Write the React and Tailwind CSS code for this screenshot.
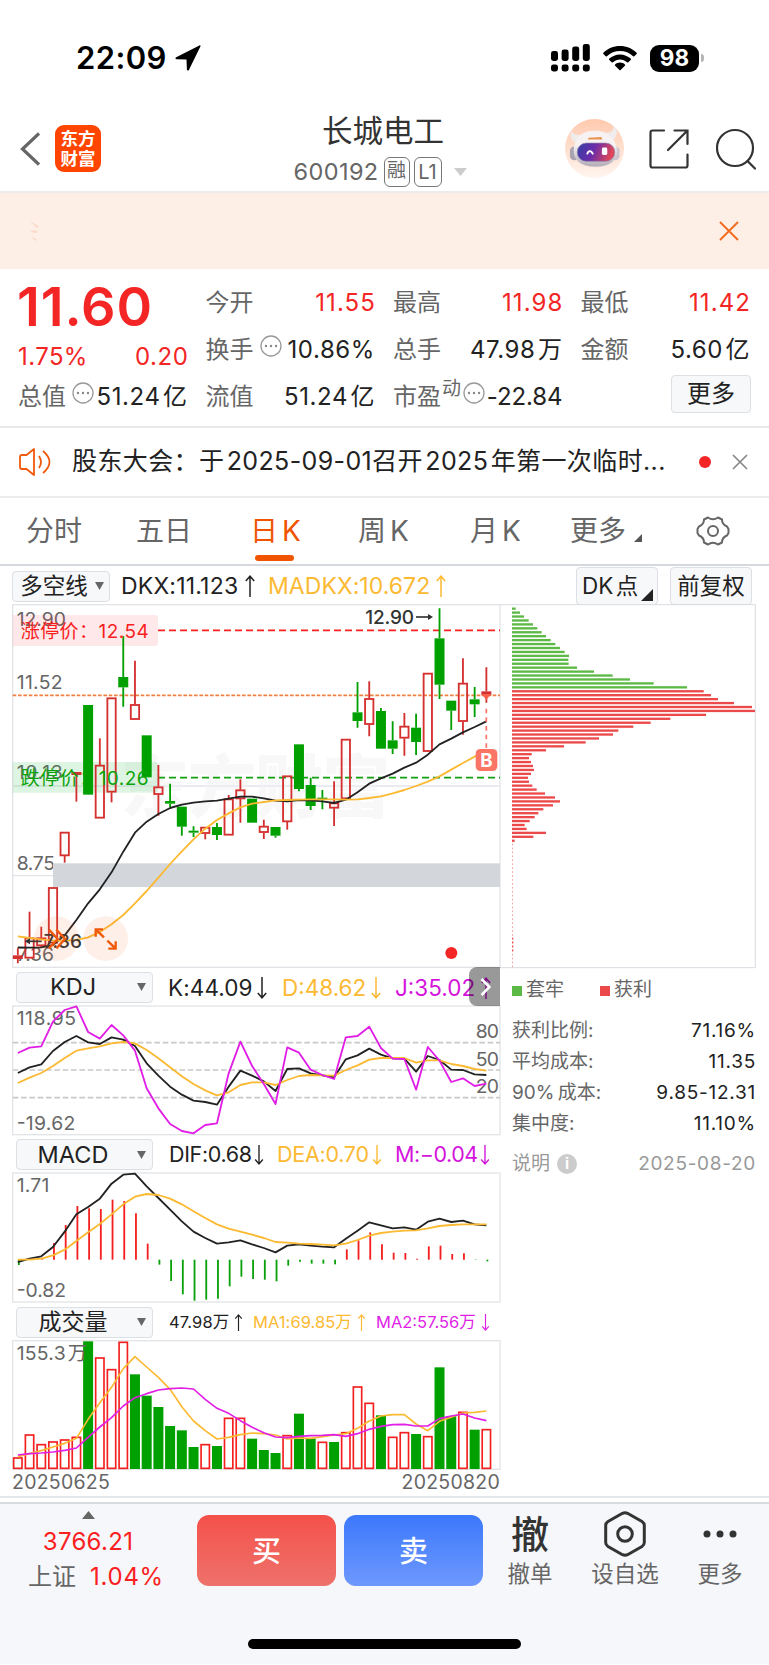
// All panels share one unit: 3 svg units per screen pixel.
const FIRST_X = 53.5;
const STEP = 35.14;
const xAt = (i) => FIRST_X + i * STEP;
const toPoints = (values) => values.map((v, i) => `${xAt(i).toFixed(1)},${v}`).join(" ");

const RED = "#d4302f";
const GREEN = "#00a000";

// [colour, high, top, bottom, low]
const candles = [
  ["r", 1165, 1186, 1197, 1210], ["r", 1055, 1133, 1195, 1195], ["r", 1100, 1133, 1158, 1162],
  ["r", 982, 982, 1150, 1150], ["r", 816, 816, 888, 908], ["r", 636, 636, 645, 725],
  ["g", 435, 435, 704, 704], ["r", 535, 615, 775, 775], ["r", 413, 413, 697, 727],
  ["g", 228, 351, 382, 440], ["r", 302, 433, 479, 479], ["g", 526, 526, 652, 652],
  ["r", 615, 680, 704, 767], ["g", 671, 723, 731, 742], ["g", 740, 740, 800, 827],
  ["g", 799, 812, 818, 831], ["r", 801, 801, 821, 838], ["g", 789, 801, 825, 840],
  ["r", 705, 716, 826, 826], ["r", 658, 689, 717, 788], ["g", 716, 716, 788, 788],
  ["r", 779, 798, 818, 837], ["g", 801, 801, 827, 833], ["r", 647, 647, 786, 809],
  ["g", 553, 553, 687, 694], ["g", 653, 675, 738, 750], ["g", 690, 713, 718, 748],
  ["r", 664, 728, 745, 798], ["r", 537, 537, 717, 717], ["g", 366, 457, 483, 503],
  ["r", 364, 415, 494, 529], ["g", 444, 453, 566, 566], ["g", 484, 541, 566, 582],
  ["r", 459, 498, 535, 587], ["g", 461, 503, 546, 585], ["r", 339, 339, 575, 575],
  ["g", 145, 235, 374, 417], ["g", 422, 422, 452, 510], ["r", 295, 369, 485, 524],
  ["g", 381, 418, 433, 471], ["r", 322, 394, 406, 428],
];

const dkx = [1162, 1163, 1162, 1155, 1126, 1080, 1030, 988, 937, 875, 818, 785, 762, 744, 734, 728, 724, 722, 716, 710, 710, 715, 722, 724, 720, 721, 724, 729, 719, 697, 671, 655, 641, 623, 608, 584, 553, 536, 517, 501, 484];
const madkx = [1129, 1134, 1138, 1142, 1142, 1140, 1132, 1116, 1093, 1065, 1030, 993, 953, 912, 874, 838, 806, 780, 760, 742, 731, 726, 721, 720, 719, 718, 718, 718, 719, 718, 714, 709, 700, 690, 678, 665, 649, 629, 609, 590, 571];

const kLine = [309, 292, 283, 243, 216, 198, 217, 222, 202, 209, 228, 280, 317, 350, 374, 392, 396, 404, 350, 302, 317, 334, 363, 297, 295, 310, 316, 322, 268, 256, 236, 254, 265, 266, 305, 258, 270, 299, 300, 313, 315];
const dLine = [339, 323, 309, 288, 264, 242, 235, 229, 220, 216, 220, 240, 265, 292, 319, 342, 361, 376, 367, 345, 337, 337, 345, 330, 318, 315, 316, 317, 300, 286, 269, 264, 264, 264, 278, 271, 271, 282, 288, 297, 302];
const jLine = [249, 233, 229, 155, 120, 109, 186, 206, 165, 196, 242, 355, 415, 462, 483, 490, 465, 460, 310, 215, 288, 342, 402, 232, 248, 299, 315, 327, 202, 198, 170, 234, 266, 267, 359, 231, 272, 336, 325, 348, 341];

const macd = [886, 870, 866, 820, 766, 709, 716, 718, 690, 694, 731, 822, 885, 934, 974, 993, 990, 987, 950, 921, 928, 930, 935, 888, 876, 882, 882, 884, 839, 812, 788, 824, 849, 850, 867, 830, 828, 853, 851, 871, 875];
const dif = [877, 867, 860, 832, 786, 734, 712, 687, 642, 615, 612, 650, 685, 720, 755, 786, 805, 822, 818, 812, 824, 835, 848, 828, 824, 828, 831, 833, 807, 783, 758, 767, 776, 773, 780, 756, 747, 757, 753, 764, 767];
const dea = [870, 870, 867, 857, 840, 814, 788, 763, 734, 704, 681, 673, 676, 687, 704, 725, 745, 764, 777, 786, 795, 805, 817, 819, 822, 823, 825, 827, 822, 811, 798, 790, 786, 783, 782, 776, 769, 766, 764, 764, 764];

const volumeTops = [472, 403, 432, 424, 418, 410, 124, 172, 207, 125, 223, 287, 321, 378, 391, 441, 432, 438, 353, 353, 416, 450, 459, 405, 341, 416, 425, 426, 396, 259, 308, 346, 410, 396, 402, 408, 202, 348, 335, 389, 387];
const volumeSides = "rrrrrrgrrrggggggrgrrgggrggrgrrrgrrgrggrgr";
const ma1 = [470, 461, 452, 441, 430, 415, 358, 308, 262, 206, 170, 201, 232, 268, 320, 363, 392, 417, 412, 404, 399, 401, 405, 417, 414, 415, 410, 405, 401, 385, 363, 348, 344, 344, 372, 392, 364, 352, 339, 337, 333];
const ma2 = [465, 461, 459, 456, 451, 444, 412, 381, 353, 318, 293, 281, 270, 266, 264, 267, 298, 325, 340, 362, 382, 398, 411, 413, 409, 407, 406, 404, 409, 401, 388, 379, 374, 373, 378, 378, 356, 348, 342, 354, 362];

const trapped = [47, 60, 72, 86, 99, 112, 125, 138, 152, 166, 180, 194, 207, 205, 206, 231, 282, 338, 390, 461, 561];
const profit = [611, 633, 654, 702, 756, 765, 618, 511, 452, 400, 355, 339, 297, 257, 192, 138, 95, 87, 93, 99, 102, 93, 84, 87, 97, 110, 135, 165, 180, 159, 130, 115, 104, 89, 74, 80, 138, 100, 44];

const costs = [
  ["获利比例:", "71.16%"],
  ["平均成本:", "11.35"],
  ["90% 成本:", "9.85-12.31"],
  ["集中度:", "11.10%"],
];

function Line({ values, color, width = 5 }) {
  return <polyline points={toPoints(values)} fill="none" stroke={color} strokeWidth={width} strokeLinejoin="round" />;
}

function Arrow({ down, className }) {
  return (
    <svg viewBox="0 0 10 22" className={className} fill="none" stroke="currentColor" strokeWidth="1.5">
      <path d={down ? "M5 0V20.5M0.8 16L5 20.8L9.2 16" : "M5 22V1.5M0.8 6L5 1.2L9.2 6"} />
    </svg>
  );
}

function Dots() {
  return (
    <svg viewBox="0 0 22 22" className="-mt-2 h-[22px] w-[22px] shrink-0" fill="none">
      <circle cx="11" cy="11" r="10" stroke="#999" strokeWidth="1.3" />
      <g fill="#888">
        <circle cx="6" cy="11" r="1.2" />
        <circle cx="11" cy="11" r="1.2" />
        <circle cx="16" cy="11" r="1.2" />
      </g>
    </svg>
  );
}

function Picker({ children, className }) {
  return (
    <div className={`flex h-[31px] shrink-0 items-center rounded border border-[#dcdfe4] bg-[#f7f8fa] text-[#222] ${className}`}>
      <span className="flex-1 text-center whitespace-nowrap">{children}</span>
      <svg viewBox="0 0 9 8" className="h-2 w-[9px] shrink-0" fill="#666">
        <path d="M0 0H9L4.5 8Z" />
      </svg>
    </div>
  );
}

function StatusBar() {
  return (
    <div className="flex h-[109px] items-center pt-[7px] pl-[76px] text-black">
      <span className="w-[94px] text-[31px] font-semibold tracking-[0.4px]">22:09</span>
      <svg viewBox="0 0 26 26" className="ml-[5px] h-[26px] w-[26px]">
        <path d="M25.5 1.2C25.7 0.5 25.2 0 24.4 0.4L1.2 12.2C0 12.9 0.2 14.2 1.5 14.2L11.5 14.4L11.9 24.6C12 26 13.3 26.2 13.9 25Z" />
      </svg>
      <svg viewBox="0 0 39 28" className="ml-[350px] h-7 w-[39px]">
        {[7, 5.5, 2.5, 0].map((y, i) => (
          <g key={y}>
            <rect x={i * 10.6} y={y} width="7" height={17 - y} rx="2.4" />
            <rect x={i * 10.6} y="20.5" width="7" height="7" rx="2.4" />
          </g>
        ))}
      </svg>
      <svg viewBox="0 0 34 25" className="ml-[13px] h-[25px] w-[34px]">
        <path d="M17 0C23.500 0 29.400 2.600 33.600 6.700C34 7.100 34 7.600 33.600 8L31.300 10.300C31 10.600 30.500 10.600 30.100 10.300C26.600 7 22 5.100 17 5.100S7.400 7 3.900 10.300C3.500 10.600 3 10.600 2.700 10.300L0.400 8C0 7.600 0 7.100 0.400 6.700C4.600 2.600 10.500 0 17 0Z" />
        <path d="M17 8.400C21.100 8.400 24.900 10 27.700 12.600C28.100 13 28.100 13.500 27.700 13.900L25.300 16.200C25 16.600 24.500 16.600 24.100 16.300C22.200 14.600 19.700 13.500 17 13.500S11.800 14.600 9.900 16.300C9.500 16.600 9 16.600 8.700 16.200L6.300 13.900C5.900 13.500 5.900 13 6.300 12.600C9.100 10 12.900 8.400 17 8.400Z" />
        <path d="M17 16.500C18.900 16.500 20.600 17.200 21.900 18.400C22.300 18.700 22.300 19.300 21.900 19.700L17.600 24C17.300 24.300 16.700 24.300 16.400 24L12.100 19.700C11.700 19.300 11.700 18.700 12.100 18.400C13.400 17.200 15.100 16.500 17 16.500Z" />
      </svg>
      <span className="ml-[13px] flex h-[27px] w-[49px] items-center justify-center rounded-[9px] bg-black text-[22.5px] font-bold text-white">
        98
      </span>
      <span className="ml-[2px] h-2 w-[3px] rounded-r bg-[#b5b5b5]" />
    </div>
  );
}

function Robot() {
  return (
    <svg viewBox="0 0 60 60" className="h-[59px] w-[59px]">
      <defs>
        <linearGradient id="halo" x1="0" y1="0" x2="0" y2="1">
          <stop offset="0" stopColor="#ffc9ae" />
          <stop offset="1" stopColor="#fff5ef" />
        </linearGradient>
        <linearGradient id="visor" x1="0" y1="0" x2="1" y2="0.2">
          <stop offset="0" stopColor="#3340a6" />
          <stop offset="0.5" stopColor="#6b2ba8" />
          <stop offset="1" stopColor="#e0485a" />
        </linearGradient>
        <linearGradient id="shell" x1="0" y1="0" x2="0" y2="1">
          <stop offset="0.4" stopColor="#f6f2f3" />
          <stop offset="1" stopColor="#b3acb8" />
        </linearGradient>
      </defs>
      <circle cx="30" cy="30" r="30" fill="url(#halo)" />
      <path d="M7 12C4 17 7 22 11 24L18 16C12 17 8 16 7 12Z" fill="#f1ecec" />
      <path d="M49 7C54 10 54 17 49 21L41 14C47 14 50 12 49 7Z" fill="#f1ecec" />
      <rect x="5" y="28" width="9" height="14" rx="4.500" fill="#aaa3b0" />
      <rect x="47" y="28" width="8.500" height="14" rx="4.200" fill="#cdc6d2" />
      <path d="M30 12C42 12 50 18 52.500 29C54.500 42 46 48.500 31 48.500S7.500 42 9 29C11 18 18 12 30 12Z" fill="url(#shell)" />
      <path d="M24 19L37 18.200L38 20.800H23Z" fill="#ea9350" />
      <rect x="12.500" y="24.500" width="38" height="18.500" rx="9" fill="url(#visor)" stroke="#8d80a8" strokeWidth="0.700" />
      <path d="M22.500 36C23.500 31.500 27 31.500 28.500 36" stroke="#fff" strokeWidth="1.900" fill="none" />
      <rect x="37.500" y="29" width="5.500" height="7.500" rx="1.500" fill="#fff" />
    </svg>
  );
}

function Header() {
  return (
    <header className="flex h-[84px] items-center border-b-2 border-[#ececec] pl-[20px]">
      <svg viewBox="0 0 20 34" className="-mt-[2px] h-[34px] w-5" fill="none" stroke="#666" strokeWidth="3.200">
        <path d="M19 1.500L2.500 17L19 32.500" />
      </svg>
      <div className="-mt-[3px] ml-[15px] flex h-[47px] w-[46px] flex-col items-center justify-center rounded-[9px] bg-[#ff4500] text-[17.500px] leading-[20px] font-semibold text-white">
        <span>东方</span>
        <span>财富</span>
      </div>
      <div className="ml-[187px] flex w-[190px] flex-col items-center">
        <h1 className="text-[30.500px] leading-[40px] text-[#333]">长城电工</h1>
        <div className="mt-[3px] -ml-[15px] flex h-[36px] items-center text-[#666]">
          <span className="ml-[9px] w-[90px] text-[23.500px] tracking-[0.400px]">600192</span>
          <span className="flex h-[30px] w-[26px] items-center justify-center rounded-[6px] border-[1.500px] border-[#777] text-[19px]">融</span>
          <span className="ml-[4px] flex h-[30px] w-[28px] items-center justify-center rounded-[6px] border-[1.500px] border-[#777] text-[20px]">L1</span>
          <svg viewBox="0 0 13 8" className="ml-3 h-2 w-[13px]" fill="#ccc">
            <path d="M0 0H13L6.500 8Z" />
          </svg>
        </div>
      </div>
      <div className="-mt-[3px] ml-auto flex items-center pr-[13px]">
        <Robot />
        <svg viewBox="0 0 40 40" className="ml-[25px] h-10 w-10" fill="none" stroke="#333" strokeWidth="2.200" strokeLinecap="round">
          <path d="M15 1.500H3.500Q1.500 1.500 1.500 3.500V36.500Q1.500 38.500 3.500 38.500H36.500Q38.500 38.500 38.500 36.500V25.500M25.500 1.500H38.500V15M38 2L19 21" />
        </svg>
        <svg viewBox="0 0 40 42" className="ml-[27px] h-[42px] w-10" fill="none" stroke="#333" strokeWidth="2.200" strokeLinecap="round">
          <circle cx="19" cy="20" r="18" />
          <path d="M31.500 33L39 40.500" />
        </svg>
      </div>
    </header>
  );
}

function Banner() {
  return (
    <div className="flex h-[76px] items-center justify-between bg-[#fdeee6] pr-[30px] pl-[30px]">
      <svg viewBox="0 0 9 20" className="h-5 w-[9px]" fill="#fad9c9">
        <path d="M0 0L8.500 5L8 7L5.500 5.500ZM0 10L7 9.500V12L3 11.500ZM0 15L6.500 18.500L5.500 20Z" />
      </svg>
      <svg viewBox="0 0 20 20" className="h-5 w-5" fill="none" stroke="#f5691b" strokeWidth="1.800">
        <path d="M1 1L19 19M19 1L1 19" />
      </svg>
    </div>
  );
}

function Stat({ label, value, red, dots, sup }) {
  return (
    <div className="flex h-[47px] items-center text-2xl whitespace-nowrap">
      <span className="-ml-px text-[#666]">{label}</span>
      {sup && <span className="-mt-4 ml-[1px] text-[19px] text-[#666]">{sup}</span>}
      {dots && <span className={sup ? "ml-[2px]" : "ml-[6px]"}><Dots /></span>}
      <span
        className={`ml-auto [word-spacing:-5px] ${sup ? "tracking-[-0.100px]" : red ? "-mr-px tracking-[1.100px]" : "tracking-[0.600px]"} ${red ? "text-[#f42525]" : "text-[#222]"}`}
      >
        {value}
      </span>
    </div>
  );
}

function Quote() {
  return (
    <section className="grid h-[159px] grid-cols-4 gap-x-[19px] border-b-2 border-[#e8e9eb] px-[19px] pt-[10px]">
      <div>
        <div className="-ml-[2px] flex h-[54px] items-center text-[54px] font-semibold tracking-[0.900px] text-[#f42525]">11.60</div>
        <div className="flex h-[40px] items-center justify-between pt-[7px] text-2xl text-[#f42525]">
          <span className="-ml-px tracking-[0.400px]">1.75%</span>
          <span className="-mr-px tracking-[0.600px]">0.20</span>
        </div>
        <Stat label="总值" value="51.24 亿" dots />
      </div>
      <div>
        <Stat label="今开" value="11.55" red />
        <Stat label="换手" value="10.86%" dots />
        <Stat label="流值" value="51.24 亿" />
      </div>
      <div>
        <Stat label="最高" value="11.98" red />
        <Stat label="总手" value="47.98 万" />
        <Stat label="市盈" value="-22.84" dots sup="动" />
      </div>
      <div>
        <Stat label="最低" value="11.42" red />
        <Stat label="金额" value="5.60 亿" />
        <button className="mt-[2px] -mr-px ml-auto flex h-[38px] w-[80px] items-center justify-center rounded border border-[#dcdfe4] bg-[#f7f8fa] text-2xl text-[#222]">
          更多
        </button>
      </div>
    </section>
  );
}

function Notice() {
  return (
    <div className="flex h-[70px] items-center border-b-2 border-[#ececec] pl-[19px] text-[#222]">
      <svg viewBox="0 0 34 28" className="h-7 w-[34px]" fill="none" stroke="#f0590a" strokeWidth="1.800" strokeLinejoin="round">
        <path d="M15 1V27L7.500 21H3Q1 21 1 19V9Q1 7 3 7H7.500ZM20 8Q24 14 20 20M24 3Q37 14 24 25" />
      </svg>
      <p className="ml-[19px] w-[610px] text-[25px] tracking-[0.380px] [word-spacing:-5px] whitespace-nowrap">
        股东大会：于 2025-09-01召开 2025 年第一次临时...
      </p>
      <span className="ml-[17px] h-3 w-3 rounded-full bg-[#f42525]" />
      <svg viewBox="0 0 16 16" className="ml-[21px] h-4 w-4" fill="none" stroke="#888" strokeWidth="1.700">
        <path d="M1 1L15 15M15 1L1 15" />
      </svg>
    </div>
  );
}

function Tabs() {
  return (
    <nav className="flex h-[68px] items-center border-b-2 border-[#d5d8de] text-[28px] [word-spacing:-4px] whitespace-nowrap text-[#666]">
      <span className="w-[109px] pl-[26px]">分时</span>
      <span className="w-[115px] pl-[27px]">五日</span>
      <span className="relative w-[107px] pl-[26px] text-[#f05400]">
        日 K
        <span className="absolute bottom-[-9px] left-[31px] h-[6px] w-[39px] rounded-sm bg-[#f05400]" />
      </span>
      <span className="w-[112px] pl-[27px]">周 K</span>
      <span className="w-[100px] pl-[27px]">月 K</span>
      <span className="flex w-[153px] pl-[27px]">
        更多
        <svg viewBox="0 0 8 8" className="mt-[24px] ml-[8px] h-2 w-2" fill="#555">
          <path d="M8 0V8H0Z" />
        </svg>
      </span>
      <svg viewBox="0 0 34 32" className="h-8 w-[34px]" fill="none" stroke="#666" strokeWidth="2" strokeLinejoin="round">
        <path d="M12 2.500Q17 6 22 2.500L26 4.500Q26 9.500 31 11.500L32.500 14V18L31 20.500Q26 22.500 26 27.500L22 29.500Q17 26 12 29.500L8 27.500Q8 22.500 3 20.500L1.500 18V14L3 11.500Q8 9.500 8 4.500Z" />
        <circle cx="17" cy="16" r="5" />
      </svg>
    </nav>
  );
}

function PriceChart() {
  return (
    <svg viewBox="36 132 1467 1095" className="block h-[365px] w-[489px]">
      <g fill="none" stroke="#e2e4e8" strokeWidth="4">
        <rect x="38" y="134" width="1462" height="1088" />
        <path d="M38 678H1500M38 947H1500" />
      </g>
      <text x="362" y="757" fontSize="205" fontWeight="900" fill="#f8f8f8" textLength="810">东方财富</text>
      <path d="M38 678H1500" stroke="#e8ebf0" strokeWidth="4" />
      <g fontSize="58" fill="#666">
        <text x="50" y="197" textLength="148">12.90</text>
        <text x="50" y="387" textLength="138">11.52</text>
        <text x="50" y="657" textLength="138">10.13</text>
        <text x="50" y="930" textLength="115">8.75</text>
        <text x="50" y="1203" textLength="112">7.36</text>
      </g>
      <path d="M38 165H466Q474 165 474 173V250Q474 258 466 258H38Z" fill="#ff2d3c" opacity="0.11" />
      <path d="M38 606H466Q474 606 474 614V690Q474 698 466 698H38Z" fill="#1fb53c" opacity="0.14" />
      <rect x="159" y="910" width="1341" height="71" fill="#d3d7dc" />
      <path d="M474 211H1500" stroke="#fa2020" strokeWidth="5" strokeDasharray="21 12" />
      <path d="M474 653H1500" stroke="#10a010" strokeWidth="5" strokeDasharray="21 12" />
      <path d="M38 406H1500" stroke="#f08040" strokeWidth="5" strokeDasharray="11 5" />
      {candles.map(([side, high, top, bottom, low], i) => {
        const x = xAt(i);
        const color = side === "r" ? RED : GREEN;
        const solid = side === "g" || bottom - top < 13;
        return (
          <g key={i} stroke={color} strokeWidth="5.500">
            <path d={`M${x} ${high}V${top}M${x} ${bottom}V${low}`} />
            {solid ? (
              <rect x={x - 15} y={top} width="30" height={bottom - top} fill={color} stroke="none" />
            ) : (
              <rect x={x - 12.5} y={top + 2} width="25" height={bottom - top - 4} fill="none" />
            )}
          </g>
        );
      })}
      <Line values={dkx} color="#222" width={5.5} />
      <Line values={madkx} color="#fcb932" width={5.5} />
      <text x="62" y="234" fontSize="57" fill="#fa1e1e" textLength="384">涨停价：12.54</text>
      <text x="62" y="675" fontSize="57" fill="#0aa30a" textLength="384">跌停价：10.26</text>
      <g fontSize="57" fontWeight="500" fill="#333">
        <text x="1096" y="192" textLength="146">12.90</text>
        <text x="131" y="1165" textLength="115">7.36</text>
      </g>
      <g stroke="#333" strokeWidth="5" fill="#333">
        <path d="M1248 171H1284" />
        <path d="M1284 162L1299 171L1284 180Z" stroke="none" />
        <path d="M90 1144H125" />
        <path d="M90 1135L74 1144L90 1153Z" stroke="none" />
      </g>
      <circle cx="169" cy="1136" r="67" fill="#f86a30" opacity="0.11" />
      <circle cx="317" cy="1136" r="67" fill="#f86a30" opacity="0.11" />
      <g fill="none" stroke="#f0590a" strokeWidth="7">
        <path d="M147 1109L173 1137L147 1165M169 1109L195 1137L169 1165" />
        <path d="M287 1130V1108H309M287 1108L312 1132M347 1144V1166H325M347 1166L322 1142" />
      </g>
      <path d="M1459 446V566" stroke="#f97362" strokeWidth="5" strokeDasharray="14 12" />
      <path d="M1445 402H1473L1459 420Z" fill="#f9604c" />
      <rect x="1427" y="567" width="65" height="66" rx="14" fill="#fa7566" />
      <text x="1459" y="620" fontSize="56" fontWeight="700" fill="#fff" textAnchor="middle">B</text>
      <circle cx="1354" cy="1179" r="18" fill="#f42525" />
    </svg>
  );
}

function KdjChart() {
  return (
    <svg viewBox="36 105 1467 393" className="block h-[131px] w-[489px]">
      <rect x="38" y="108" width="1462" height="386" fill="none" stroke="#e2e4e8" strokeWidth="4" />
      <path d="M38 218H1500M38 300H1500M38 383H1500" stroke="#c9c9c9" strokeWidth="5" strokeDasharray="17 8" />
      <g fontSize="58" fill="#666">
        <text x="50" y="166" textLength="178">118.95</text>
        <text x="50" y="480" textLength="176">-19.62</text>
        <text x="1427" y="205" textLength="70">80</text>
        <text x="1427" y="288" textLength="70">50</text>
        <text x="1427" y="370" textLength="70">20</text>
      </g>
      <Line values={kLine} color="#222" width={5.5} />
      <Line values={dLine} color="#fcb932" width={5.5} />
      <Line values={jLine} color="#e01ee6" width={5.5} />
    </svg>
  );
}

function MacdChart() {
  return (
    <svg viewBox="36 607 1467 393" className="block h-[131px] w-[489px]">
      <rect x="38" y="610" width="1462" height="387" fill="none" stroke="#e2e4e8" strokeWidth="4" />
      <g fontSize="58" fill="#666">
        <text x="50" y="668" textLength="98">1.71</text>
        <text x="50" y="982" textLength="148">-0.82</text>
      </g>
      {macd.map((y, i) => (
        <path key={i} d={`M${xAt(i) + 3} 870V${y}`} stroke={y < 870 ? "#f42020" : "#0aa00a"} strokeWidth="5.500" />
      ))}
      <Line values={dif} color="#222" width={5.5} />
      <Line values={dea} color="#fcb932" width={5.5} />
    </svg>
  );
}

function VolumeChart() {
  return (
    <svg viewBox="36 120 1467 390" className="block h-[130px] w-[489px]">
      <rect x="38" y="122" width="1462" height="386" fill="none" stroke="#e2e4e8" strokeWidth="4" />
      {volumeTops.map((y, i) =>
        volumeSides[i] === "r" ? (
          <rect key={i} x={xAt(i) - 12.5} y={y + 2} width="25" height={503 - y} fill="none" stroke="#f42020" strokeWidth="5" />
        ) : (
          <rect key={i} x={xAt(i) - 15} y={y} width="30" height={507 - y} fill={GREEN} />
        )
      )}
      <text x="50" y="179" fontSize="58" fill="#666" textLength="211" className="[word-spacing:-12px]">155.3 万</text>
      <Line values={ma1} color="#fcb932" />
      <Line values={ma2} color="#e01ee6" />
    </svg>
  );
}

function ChipChart() {
  return (
    <svg viewBox="0 132 771 1095" className="block h-[365px] w-[257px]">
      <path d="M0 134H766V1223H0" fill="none" stroke="#d8dbe0" strokeWidth="3" />
      {[...trapped, ...profit].map((x, i) => (
        <rect key={i} x="36" y={142.5 + i * 11.8} width={x - 36} height="7" fill={i < trapped.length ? "#5cb946" : "#ec4a4a"} />
      ))}
      <path d="M37.500 851V1222" stroke="#f3a0a0" strokeWidth="3" strokeDasharray="5 6.800" />
      <path d="M38 1133V1178" stroke="#ec4a4a" strokeWidth="4" strokeDasharray="5 6.800" />
    </svg>
  );
}

function Charts() {
  return (
    <section className="flex h-[932px] border-b-2 border-[#e4e6ea]">
      <div className="w-[489px] pl-[12px]">
        <div className="flex h-[38px] w-[489px] items-center pt-[2px] text-[23px] whitespace-nowrap text-[#222]">
          <Picker className="w-[98px] pr-[5px] text-[22.500px]">多空线</Picker>
          <span className="ml-[11px] w-[124px] tracking-[0.200px]">DKX:11.123</span>
          <Arrow className="h-[22px] w-[10px]" />
          <span className="ml-[13px] flex items-center text-[#fcb932]">
            <span className="w-[168px] tracking-[0.050px]">MADKX:10.672</span>
            <Arrow className="h-[22px] w-[10px]" />
          </span>
        </div>
        <PriceChart />
        <div className="relative flex h-[36px] w-[489px] items-center pt-px pl-1 text-[22.500px] whitespace-nowrap text-[#222]">
          <Picker className="w-[137px] pr-[6px] pb-px pr-[6px] text-[23.500px] [&>span]:mr-[8px]">KDJ</Picker>
          <span className="ml-[15px] w-[89px] tracking-[0.100px]">K:44.09</span>
          <Arrow down className="h-[22px] w-[10px]" />
          <span className="ml-[15px] flex items-center text-[#fcb932]">
            <span className="w-[89px]">D:48.62</span>
            <Arrow down className="h-[22px] w-[10px]" />
          </span>
          <span className="ml-[14px] flex items-center text-[#d414dc]">
            <span className="w-[86px]">J:35.02</span>
            <Arrow className="h-[22px] w-[10px]" />
          </span>
          <span className="absolute -top-[2px] right-[1px] flex h-[39px] w-[31px] items-center justify-center rounded-tl-lg rounded-bl-lg bg-black/40">
            <svg viewBox="0 0 11 18" className="mr-[-2px] h-[18px] w-[11px]" fill="none" stroke="#fff" strokeWidth="2.500">
              <path d="M1.500 1L9.500 9L1.500 17" />
            </svg>
          </span>
        </div>
        <KdjChart />
        <div className="flex h-[36px] w-[489px] items-center pt-px pl-1 text-[21.500px] whitespace-nowrap text-[#222]">
          <Picker className="w-[137px] pr-[6px] text-[23.500px] [&>span]:mr-[8px]">MACD</Picker>
          <span className="ml-[16px] w-[85px] tracking-[-0.350px]">DIF:0.68</span>
          <Arrow down className="h-[20px] w-[10px]" />
          <span className="ml-[13px] flex items-center text-[#fcb932]">
            <span className="w-[95px] tracking-[-0.250px]">DEA:0.70</span>
            <Arrow down className="h-[20px] w-[10px]" />
          </span>
          <span className="ml-[13px] flex items-center text-[#d414dc]">
            <span className="w-[85px] tracking-[-0.450px]">M:−0.04</span>
            <Arrow down className="h-[20px] w-[10px]" />
          </span>
        </div>
        <MacdChart />
        <div className="flex h-[37px] w-[489px] items-center pt-px pl-1 text-[16.500px] whitespace-nowrap text-[#222]">
          <Picker className="w-[137px] pr-[6px] text-[23px] [&>span]:mr-[8px]">成交量</Picker>
          <span className="ml-[16px] w-[65px] tracking-[0.150px]">47.98万</span>
          <Arrow className="h-[17px] w-[9px]" />
          <span className="ml-[10px] flex items-center text-[#fcb932]">
            <span className="w-[104px] tracking-[0.050px]">MA1:69.85万</span>
            <Arrow className="h-[17px] w-[9px]" />
          </span>
          <span className="ml-[10px] flex items-center text-[#e01ee6]">
            <span className="w-[105px]">MA2:57.56万</span>
            <Arrow down className="h-[17px] w-[9px]" />
          </span>
        </div>
        <VolumeChart />
        <div className="flex h-[26px] w-[488px] items-center justify-between text-[19.500px] tracking-[0.250px] text-[#666]">
          <span>20250625</span>
          <span>20250820</span>
        </div>
      </div>
      <aside className="ml-[11px] w-[257px]">
        <div className="flex h-[38px] gap-3 pt-px pl-[76px] text-[22.500px] text-[#222]">
          <button className="relative flex h-[38px] w-[82px] items-center rounded border border-[#dcdfe4] bg-[#f7f8fa] pl-[5px] [word-spacing:-4px] whitespace-nowrap">
            DK 点
            <svg viewBox="0 0 12 12" className="absolute right-1 bottom-[3px] h-3 w-3" fill="#222">
              <path d="M12 0V12H0Z" />
            </svg>
          </button>
          <button className="flex h-[38px] w-[82px] shrink-0 items-center justify-center rounded border border-[#dcdfe4] bg-[#f7f8fa]">
            前复权
          </button>
        </div>
        <ChipChart />
        <div className="pt-px pr-px pl-[12px] text-[19px] text-[#666]">
          <div className="flex h-[41px] items-center">
            <span className="h-[10px] w-[10px] bg-[#5cb946]" />
            <span className="ml-1 w-[74px]">套牢</span>
            <span className="h-[10px] w-[10px] bg-[#ec4a4a]" />
            <span className="ml-1">获利</span>
          </div>
          <div className="pt-[5px]">
            {costs.map(([label, value]) => (
              <div key={label} className="flex h-[31px] items-center justify-between">
                <span className="[word-spacing:-2px]">{label}</span>
                <span className="tracking-[0.750px] text-[#222]">{value}</span>
              </div>
            ))}
          </div>
          <div className="mt-[7px] flex h-[34px] items-center text-[#999]">
            <span>说明</span>
            <span className="ml-[7px] flex h-5 w-5 items-center justify-center rounded-full bg-[#ccc] text-[15px] font-bold text-white">i</span>
            <span className="ml-auto tracking-[0.700px]">2025-08-20</span>
          </div>
        </div>
      </aside>
    </section>
  );
}

function BottomBar() {
  return (
    <footer className="mt-1 flex h-[162px] flex-col items-center border-t-2 border-[#d8dbe0] bg-[#f6f7fa]">
      <div className="flex h-[96px] w-full pt-[6px] whitespace-nowrap">
        <div className="flex w-[176px] flex-col items-center">
          <svg viewBox="0 0 13 8" className="mt-px h-2 w-[13px]" fill="#666">
            <path d="M6.500 0L13 8H0Z" />
          </svg>
          <span className="mt-[6px] text-2xl leading-[34px] tracking-[0.300px] text-[#fa2020]">3766.21</span>
          <span className="mt-[1px] ml-[16px] text-2xl leading-[34px] text-[#666]">
            上证<span className="ml-[14px] tracking-[0.700px] text-[#fa2020]">1.04%</span>
          </span>
        </div>
        <button className="mt-[5px] ml-[21px] flex h-[71px] w-[139px] items-center justify-center rounded-xl bg-linear-to-b from-[#f4504a] to-[#ee716b] pt-[3px] text-[29px] font-medium text-white">
          买
        </button>
        <button className="mt-[5px] ml-[8px] flex h-[71px] w-[139px] items-center justify-center rounded-xl bg-linear-to-b from-[#3b78fb] to-[#6d98fe] pt-[3px] text-[29px] font-medium text-white">
          卖
        </button>
        <div className="ml-[17px] flex w-[60px] flex-col items-center text-[22.500px] text-[#666]">
          <span className="mt-[2px] text-[38px] leading-[45px] font-medium text-[#333]">撤</span>
          <span className="leading-[34px]">撤单</span>
        </div>
        <div className="ml-[29px] flex w-[72px] flex-col items-center text-[22.500px] text-[#666]">
          <svg viewBox="0 0 42 46" className="mt-px h-[46px] w-[42px]" fill="none" stroke="#333" strokeWidth="3">
            <path d="M18.500 2.300Q21 1 23.500 2.300L38 10.500Q40.300 12 40.300 14.500V31.500Q40.300 34 38 35.500L23.500 43.700Q21 45 18.500 43.700L4 35.500Q1.700 34 1.700 31.500V14.500Q1.700 12 4 10.500Z" />
            <circle cx="21" cy="23" r="7.300" />
          </svg>
          <span className="leading-[34px]">设自选</span>
        </div>
        <div className="ml-[23px] flex w-[72px] flex-col items-center text-[22.500px] text-[#666]">
          <svg viewBox="0 0 34 46" className="mt-px h-[46px] w-[34px]" fill="#333">
            <circle cx="4" cy="23" r="3.500" />
            <circle cx="17" cy="23" r="3.500" />
            <circle cx="30" cy="23" r="3.500" />
          </svg>
          <span className="leading-[34px]">更多</span>
        </div>
      </div>
      <div className="mt-[39px] h-[10px] w-[273px] rounded-full bg-black" />
    </footer>
  );
}

export default function App() {
  return (
    <div className="h-[1665px] w-[769px] overflow-hidden bg-white font-['Inter','Noto_Sans_CJK_SC',sans-serif]">
      <StatusBar />
      <Header />
      <Banner />
      <Quote />
      <Notice />
      <Tabs />
      <Charts />
      <BottomBar />
    </div>
  );
}
